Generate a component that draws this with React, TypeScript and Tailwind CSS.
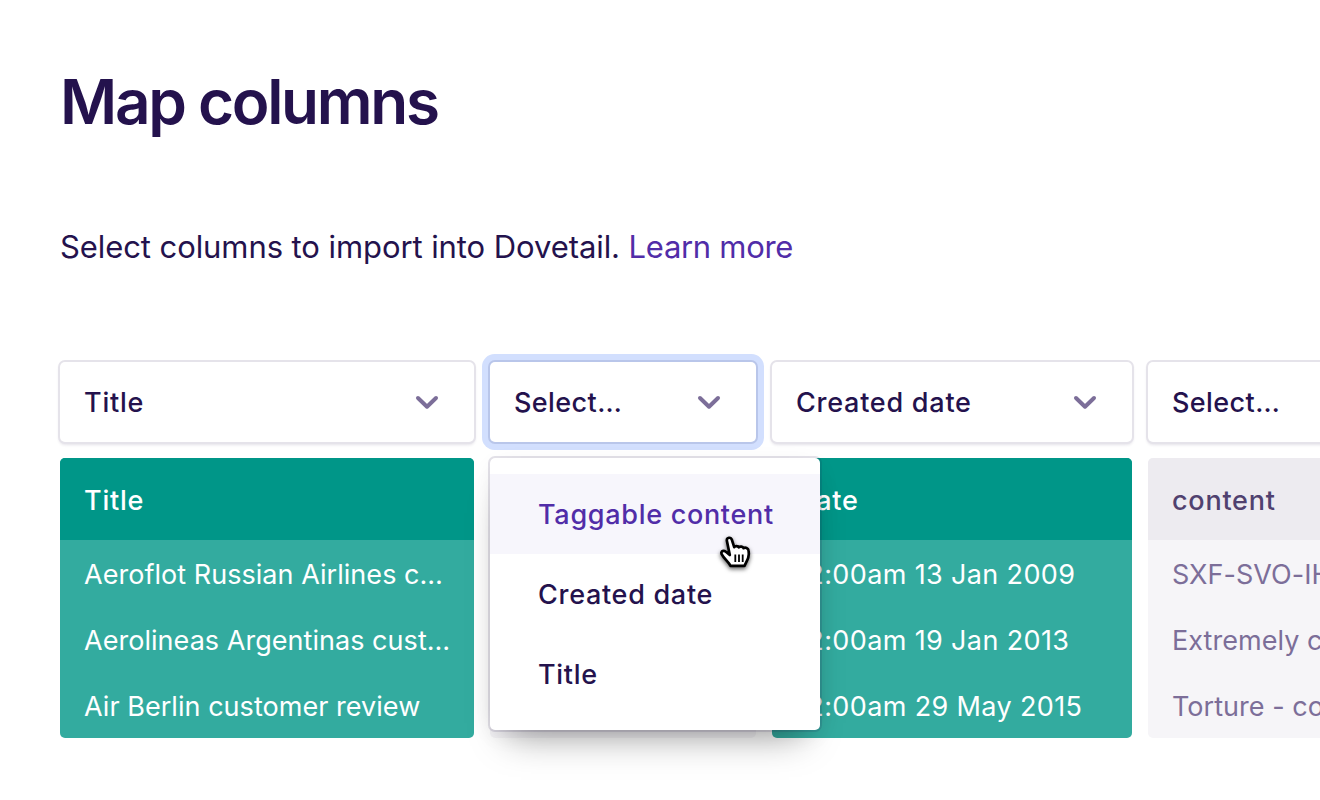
import type { ReactNode } from "react";

function Chevron() {
  return (
    <svg className="h-[16px] w-[24px] shrink-0" viewBox="0 0 24 16" fill="none" stroke="#7c6e99" strokeWidth="4" strokeLinecap="round" strokeLinejoin="round">
      <path d="M3 4L12 12.7L21 4" />
    </svg>
  );
}

function Select({ label, focused = false }: { label: string; focused?: boolean }) {
  const ring = focused
    ? "shadow-[0_0_0_2px_#b9c6ea,0_0_0_8px_#d2dffe]"
    : "shadow-[0_0_0_2px_#e5e3ea,0_2px_3px_1px_rgba(36,18,77,0.12)]";
  const tracking = label === "Select…" ? "tracking-[0.4px]" : "tracking-[0.75px]";
  return (
    <div className={`flex h-20 items-center justify-between rounded-[5px] bg-white pr-[35px] pl-6 ${ring}`}>
      <span className={`pt-px text-[27px] leading-10 font-medium whitespace-nowrap text-[#24124d] ${tracking}`}>{label}</span>
      <Chevron />
    </div>
  );
}

type ColumnProps = {
  width: string;
  select: string;
  header: string;
  rows: string[];
  rowTracking?: string;
  active?: boolean;
  focused?: boolean;
  children?: ReactNode;
};

function Column({ width, select, header, rows, rowTracking = "tracking-[0.04px]", active, focused, children }: ColumnProps) {
  return (
    <div className={`relative flex shrink-0 flex-col gap-4 ${width}`}>
      <Select label={select} focused={focused} />
      <div className={`overflow-hidden rounded-[5px] whitespace-nowrap ${active ? "bg-[#33ab9f] text-white" : "bg-[#f6f5f8] text-[#7c6e99]"}`}>
        <div className={`flex h-[82px] items-center px-6 pt-[5px] text-[27px] font-medium tracking-[0.75px] ${active ? "bg-[#009688]" : "bg-[#edebf0] text-[#50416f]"}`}>
          {header}
        </div>
        {rows.map((row, i) => (
          <div key={i} className={`flex h-[66px] items-center px-6 pt-[5px] text-[27px] ${rowTracking}`}>
            {row}
          </div>
        ))}
      </div>
      {children}
    </div>
  );
}

function HandCursor() {
  return (
    <svg className="absolute top-[74px] left-[226px] h-[44px] w-[40px] drop-shadow-[0_2px_2px_rgba(0,0,0,0.6)]" viewBox="0 0 40 44">
      <path
        d="M10.8 8.4C10.8 5.2 14.8 4.8 15.9 7.8L18.2 15.2C19 13.8 22 13.8 22.8 15.4C24 14.1 26.8 14.4 27.6 16.2C29.2 15 32.3 16 32.6 18.7C33.6 24.2 31.8 27.4 28.5 33.8H14.5C12.5 30 8 26.7 5.6 22.2C4.6 20 6.4 18.2 8.6 19C10.5 19.7 11.5 21.2 13.8 23Z"
        fill="white"
        stroke="black"
        strokeWidth="2.7"
        strokeLinejoin="round"
      />
      <path d="M19.3 22.4V30M23 22.4V30M26.7 22.4V30" stroke="black" strokeWidth="1.8" />
    </svg>
  );
}

function Menu() {
  const item = "flex h-20 items-center pl-[48px] pt-[3px] text-[27px] font-medium tracking-[0.7px] whitespace-nowrap";
  return (
    <div className="absolute top-24 left-0 z-10 w-[330px] rounded-[5px] bg-white py-4 shadow-[0_0_0_2px_rgba(36,18,77,0.12),0_24px_36px_-18px_rgba(0,0,0,0.36),0_6px_24px_-6px_rgba(0,0,0,0.12)]">
      <div className={`${item} bg-[#f7f6fc] text-[#512da8]`}>Taggable content</div>
      <div className={`${item} text-[#24124d]`}>Created date</div>
      <div className={`${item} text-[#24124d]`}>Title</div>
      <HandCursor />
    </div>
  );
}

export default function App() {
  return (
    <div className="h-[800px] w-[1320px] overflow-hidden bg-white pt-[62px] pl-[60px] font-['Inter',sans-serif] text-[#24124d]">
      <h1 className="text-[62px] leading-[80px] font-semibold tracking-[-2.3px]">Map columns</h1>
      <p className="mt-[81px] text-[31px] leading-[48px] tracking-[-0.08px] whitespace-nowrap">
        Select columns to import into Dovetail. <a className="tracking-[-0.3px] text-[#512da8]">Learn more</a>
      </p>
      <div className="mt-[91px] flex gap-4">
        <Column width="w-[414px]" select="Title" header="Title" active rows={["Aeroflot Russian Airlines c…", "Aerolineas Argentinas cust…", "Air Berlin customer review"]} />
        <Column width="w-[266px]" select="Select…" header="" focused rows={["", "", ""]}>
          <Menu />
        </Column>
        <Column width="w-[360px]" select="Created date" header="Date" active rowTracking="tracking-[0.37px]" rows={["12:00am 13 Jan 2009", "12:00am 19 Jan 2013", "12:00am 29 May 2015"]} />
        <Column width="w-[414px]" select="Select…" header="content" rows={["SXF-SVO-IH", "Extremely c", "Torture - co"]} />
      </div>
    </div>
  );
}
